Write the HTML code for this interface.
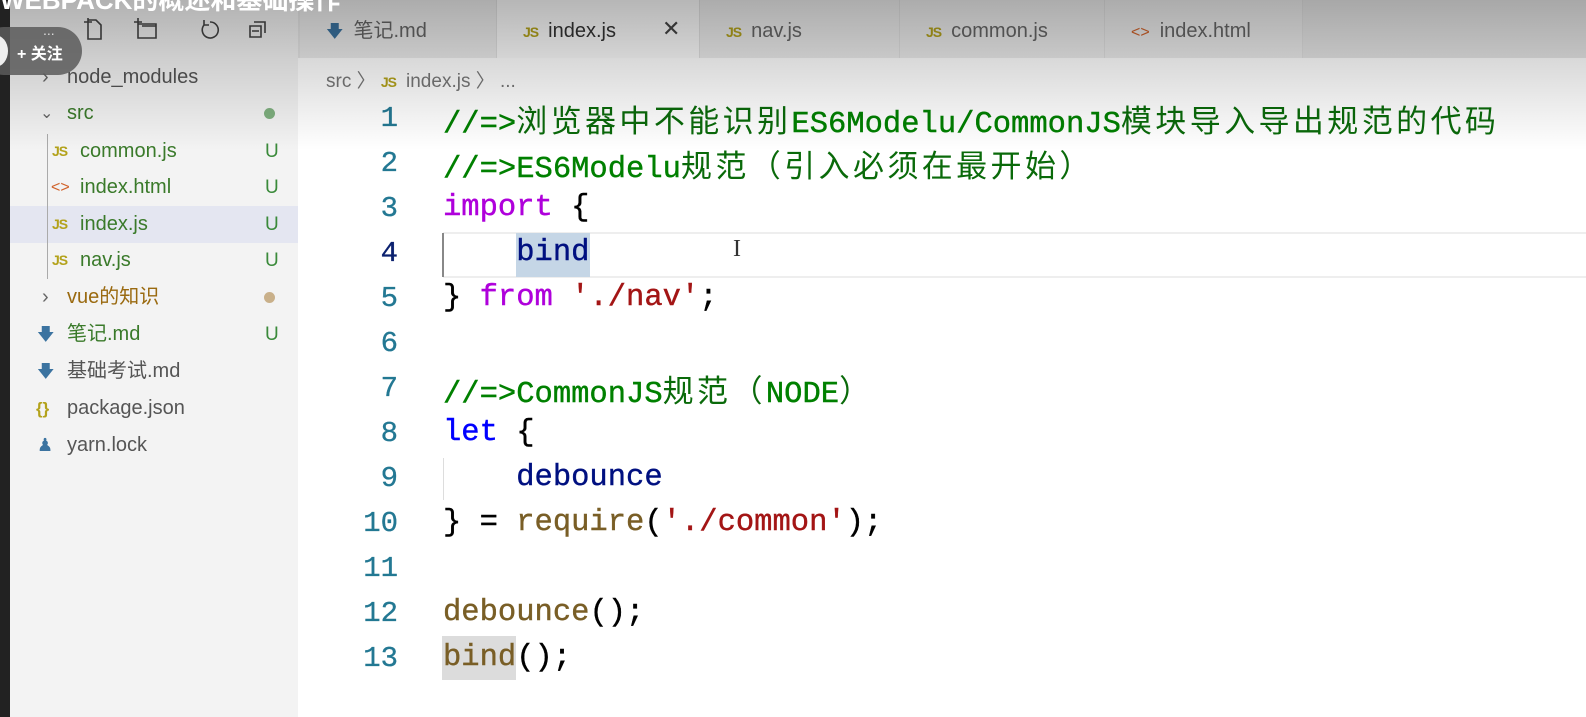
<!DOCTYPE html>
<html><head><meta charset="utf-8"><style>
*{margin:0;padding:0;box-sizing:border-box}
body{width:1586px;height:717px;overflow:hidden;background:#fff;position:relative;font-family:"Liberation Sans","Noto Sans CJK SC",sans-serif}
.abs{position:absolute}
#side{left:0;top:0;width:298px;height:717px;background:#f3f3f3}
#tabs{left:298px;top:0;width:1288px;height:58px;background:#e6e6e6}
.tab{position:absolute;top:0;height:58px;background:#ececec;border-right:1px solid #e0e0e0;font-size:20px;color:#666;padding-left:26px;line-height:62px;white-space:nowrap}
.tab.act{background:#fafafa;color:#333}
.js{color:#b3a21b;font-weight:bold;font-size:14px;margin-right:10px;letter-spacing:-1px}
.ht{color:#d0622a;font-size:16px;margin-right:10px}
.md{color:#3b73a0;margin-right:10px;font-size:17px}
.row{position:absolute;left:0;width:298px;height:37px;line-height:37px;font-size:20px;color:#555;white-space:nowrap}
.row .u{position:absolute;left:265px;color:#3a8a3a;font-size:19px}
.green{color:#3a7a2a}
.code{position:absolute;left:443px;font-family:"Liberation Mono","Noto Sans CJK SC",monospace;font-size:30.5px;white-space:pre;line-height:45px;height:45px;-webkit-text-stroke:0.4px currentColor;top:0}
.ln{position:absolute;left:330px;width:68px;text-align:right;font-family:"Liberation Mono",monospace;font-size:29px;color:#237893;line-height:45px;-webkit-text-stroke:0.3px currentColor}
.c{color:#008000}
.cj{font-family:"Noto Sans CJK SC",sans-serif;font-size:31px;letter-spacing:3.4px;color:#0a6a0a;-webkit-text-stroke:0}
.k{color:#af00db}.b{color:#0000ff}.v{color:#001080}.s{color:#a31515}.f{color:#795e26}
#shade{left:0;top:0;width:1586px;height:160px;background:linear-gradient(rgba(0,0,0,0.27),rgba(0,0,0,0.15) 60px,rgba(0,0,0,0) 150px);pointer-events:none}
</style></head><body>
<div id="side" class="abs"></div>
<div class="abs" style="left:0;top:206px;width:298px;height:37px;background:#e4e6f1"></div>
<div class="abs" style="left:47px;top:134px;width:1px;height:145px;background:#aaa"></div>

<div id="tabs" class="abs"></div>
<div class="tab" style="left:300px;width:197px"><span class="md">&#129095;</span>笔记.md</div>
<div class="tab act" style="left:497px;width:203px"><span class="js">JS</span>index.js<span style="position:absolute;left:165px;top:-2px;font-size:22px;color:#444">✕</span></div>
<div class="tab" style="left:700px;width:200px"><span class="js">JS</span>nav.js</div>
<div class="tab" style="left:900px;width:205px"><span class="js">JS</span>common.js</div>
<div class="tab" style="left:1105px;width:198px"><span class="ht">&lt;&gt;</span>index.html</div>

<div class="abs" style="left:326px;top:66px;font-size:19px;color:#777;white-space:nowrap">src &#12297; <span class="js">JS</span>index.js &#12297; ...</div>

<div class="row" style="top:59px"><span style="position:absolute;left:42px;color:#666">&#8250;</span><span style="position:absolute;left:67px">node_modules</span></div>
<div class="row" style="top:95px"><span style="position:absolute;left:40px;color:#666;font-size:16px">&#8964;</span><span class="green" style="position:absolute;left:67px">src</span><span style="position:absolute;left:264px;top:13px;width:11px;height:11px;border-radius:50%;background:#7fb07f"></span></div>
<div class="row" style="top:133px"><span class="js" style="position:absolute;left:52px">JS</span><span class="green" style="position:absolute;left:80px">common.js</span><span class="u">U</span></div>
<div class="row" style="top:169px"><span class="ht" style="position:absolute;left:51px">&lt;&gt;</span><span class="green" style="position:absolute;left:80px">index.html</span><span class="u">U</span></div>
<div class="row" style="top:206px"><span class="js" style="position:absolute;left:52px">JS</span><span class="green" style="position:absolute;left:80px">index.js</span><span class="u">U</span></div>
<div class="row" style="top:242px"><span class="js" style="position:absolute;left:52px">JS</span><span class="green" style="position:absolute;left:80px">nav.js</span><span class="u">U</span></div>
<div class="row" style="top:279px"><span style="position:absolute;left:42px;color:#666">&#8250;</span><span style="position:absolute;left:67px;color:#9a6a10">vue的知识</span><span style="position:absolute;left:264px;top:13px;width:11px;height:11px;border-radius:50%;background:#c9b08a"></span></div>
<div class="row" style="top:316px"><span class="md" style="position:absolute;left:37px">&#129095;</span><span class="green" style="position:absolute;left:67px">笔记.md</span><span class="u">U</span></div>
<div class="row" style="top:353px"><span class="md" style="position:absolute;left:37px">&#129095;</span><span style="position:absolute;left:67px">基础考试.md</span></div>
<div class="row" style="top:390px"><span style="position:absolute;left:36px;color:#b3a21b;font-size:17px;font-weight:bold">{}</span><span style="position:absolute;left:67px">package.json</span></div>
<div class="row" style="top:427px"><span style="position:absolute;left:37px;color:#3b73a0;font-size:18px">&#9823;</span><span style="position:absolute;left:67px">yarn.lock</span></div>

<svg class="abs" style="left:80px;top:14px" width="200" height="30" fill="none" stroke="#444" stroke-width="1.6">
<path d="M8 6h8l5 5v14H8V12M4 8h8M8 4v8"/>
<path d="M58 10h18v14H58V8M54 8h8M58 4v8M62 12h14"/>
<path d="M130 8a8 8 0 1 1-6 3M124 6v5h5"/>
<path d="M170 12h11v11h-11zM174 8h11v11M172 17h7"/>
</svg>

<div class="abs" style="left:443px;top:232px;width:1143px;height:46px;border-top:2px solid #eee;border-bottom:2px solid #eee"></div>
<div class="abs" style="left:442px;top:233px;width:2px;height:44px;background:#888"></div>
<div class="abs" style="left:443px;top:458px;width:1px;height:42px;background:#ddd"></div>
<div class="abs" style="left:516px;top:233px;width:74px;height:44px;background:#c5d6e6"></div>
<div class="abs" style="left:442px;top:636px;width:74px;height:44px;background:#dcdcdc"></div>
<div class="abs" style="left:733px;top:236px;font-size:24px;color:#333;font-family:'Liberation Serif',serif">I</div>

<div class="ln" style="top:96px">1</div>
<div class="code c" style="top:96px">//=&gt;<span class="cj">浏览器中不能识别</span>ES6Modelu/CommonJS<span class="cj">模块导入导出规范的代码</span></div>
<div class="ln" style="top:141px">2</div>
<div class="code c" style="top:141px">//=&gt;ES6Modelu<span class="cj">规范（引入必须在最开始）</span></div>
<div class="ln" style="top:186px">3</div>
<div class="code" style="top:186px"><span class="k">import</span> {</div>
<div class="ln" style="top:231px;color:#0b216f">4</div>
<div class="code v" style="top:231px">    bind</div>
<div class="ln" style="top:276px">5</div>
<div class="code" style="top:276px">} <span class="k">from</span> <span class="s">'./nav'</span>;</div>
<div class="ln" style="top:321px">6</div>
<div class="ln" style="top:366px">7</div>
<div class="code c" style="top:366px">//=&gt;CommonJS<span class="cj">规范（</span>NODE<span class="cj">）</span></div>
<div class="ln" style="top:411px">8</div>
<div class="code" style="top:411px"><span class="b">let</span> {</div>
<div class="ln" style="top:456px">9</div>
<div class="code v" style="top:456px">    debounce</div>
<div class="ln" style="top:501px">10</div>
<div class="code" style="top:501px">} = <span class="f">require</span>(<span class="s">'./common'</span>);</div>
<div class="ln" style="top:546px">11</div>
<div class="ln" style="top:591px">12</div>
<div class="code" style="top:591px"><span class="f">debounce</span>();</div>
<div class="ln" style="top:636px">13</div>
<div class="code" style="top:636px"><span class="f">bind</span>();</div>

<div id="shade" class="abs"></div>

<div class="abs" style="left:0;top:0;width:10px;height:717px;background:#222"></div>
<div class="abs" style="left:0;top:-20px;font-size:26px;font-weight:bold;color:#fff;white-space:nowrap">WEBPACK的概述和基础操作</div>
<div class="abs" style="left:-20px;top:27px;width:102px;height:48px;border-radius:24px;background:rgba(90,90,90,0.85)"></div>
<div class="abs" style="left:-18px;top:35px;width:26px;height:32px;border-radius:50%;background:#eee"></div>
<div class="abs" style="left:43px;top:22px;font-size:14px;color:#ddd">...</div>
<div class="abs" style="left:17px;top:40px;font-size:16px;color:#fff;font-weight:bold;white-space:nowrap">+ 关注</div>
</body></html>
